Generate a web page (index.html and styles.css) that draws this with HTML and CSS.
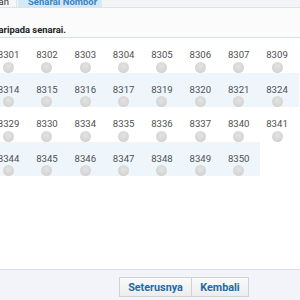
FILE: index.html
```html
<!DOCTYPE html>
<html lang="ms">
<head>
<meta charset="utf-8">
<title>Senarai Nombor</title>
<link rel="stylesheet" href="styles.css">
</head>
<body>
<div class="page">
  <div class="tabs">
    <div class="tab tab-first"><span>Pilihan</span></div>
    <div class="tab tab-active">Senarai Nombor</div>
  </div>
  <div class="intro">
    <div class="intro-box"><p class="intro-text">Sila pilih nombor daripada senarai.</p></div>
  </div>
  <div class="grid">
    <div class="cell"><div class="opt"><span class="num">8301</span><span class="radio"></span></div></div>
    <div class="cell"><div class="opt"><span class="num">8302</span><span class="radio"></span></div></div>
    <div class="cell"><div class="opt"><span class="num">8303</span><span class="radio"></span></div></div>
    <div class="cell"><div class="opt"><span class="num">8304</span><span class="radio"></span></div></div>
    <div class="cell"><div class="opt"><span class="num">8305</span><span class="radio"></span></div></div>
    <div class="cell"><div class="opt"><span class="num">8306</span><span class="radio"></span></div></div>
    <div class="cell"><div class="opt"><span class="num">8307</span><span class="radio"></span></div></div>
    <div class="cell"><div class="opt"><span class="num">8309</span><span class="radio"></span></div></div>

    <div class="cell alt"><div class="opt"><span class="num">8314</span><span class="radio"></span></div></div>
    <div class="cell alt"><div class="opt"><span class="num">8315</span><span class="radio"></span></div></div>
    <div class="cell alt"><div class="opt"><span class="num">8316</span><span class="radio"></span></div></div>
    <div class="cell alt"><div class="opt"><span class="num">8317</span><span class="radio"></span></div></div>
    <div class="cell alt"><div class="opt"><span class="num">8319</span><span class="radio"></span></div></div>
    <div class="cell alt"><div class="opt"><span class="num">8320</span><span class="radio"></span></div></div>
    <div class="cell alt"><div class="opt"><span class="num">8321</span><span class="radio"></span></div></div>
    <div class="cell alt"><div class="opt"><span class="num">8324</span><span class="radio"></span></div></div>

    <div class="cell"><div class="opt"><span class="num">8329</span><span class="radio"></span></div></div>
    <div class="cell"><div class="opt"><span class="num">8330</span><span class="radio"></span></div></div>
    <div class="cell"><div class="opt"><span class="num">8334</span><span class="radio"></span></div></div>
    <div class="cell"><div class="opt"><span class="num">8335</span><span class="radio"></span></div></div>
    <div class="cell"><div class="opt"><span class="num">8336</span><span class="radio"></span></div></div>
    <div class="cell"><div class="opt"><span class="num">8337</span><span class="radio"></span></div></div>
    <div class="cell"><div class="opt"><span class="num">8340</span><span class="radio"></span></div></div>
    <div class="cell"><div class="opt"><span class="num">8341</span><span class="radio"></span></div></div>

    <div class="cell alt"><div class="opt"><span class="num">8344</span><span class="radio"></span></div></div>
    <div class="cell alt"><div class="opt"><span class="num">8345</span><span class="radio"></span></div></div>
    <div class="cell alt"><div class="opt"><span class="num">8346</span><span class="radio"></span></div></div>
    <div class="cell alt"><div class="opt"><span class="num">8347</span><span class="radio"></span></div></div>
    <div class="cell alt"><div class="opt"><span class="num">8348</span><span class="radio"></span></div></div>
    <div class="cell alt"><div class="opt"><span class="num">8349</span><span class="radio"></span></div></div>
    <div class="cell alt"><div class="opt"><span class="num">8350</span><span class="radio"></span></div></div>
  </div>
  <div class="spacer"></div>
  <div class="footer">
    <div class="btn-group">
      <button class="btn btn-next" type="button">Seterusnya</button>
      <button class="btn btn-back" type="button">Kembali</button>
    </div>
  </div>
</div>
</body>
</html>
```

FILE: styles.css
```css
* { box-sizing: border-box; }
html, body {
  margin: 0;
  padding: 0;
  background: #ffffff;
  overflow: hidden;
}
body {
  font-family: Roboto, "Noto Sans", Arial, sans-serif;
  color: #555555;
}
.page {
  width: 300px;
  height: 300px;
  display: flex;
  flex-direction: column;
  overflow: hidden;
}
.tabs {
  display: flex;
  height: 8px;
  background: #f3f4f5;
  border-bottom: 1px solid #dfe3e6;
  overflow: hidden;
  align-items: flex-end;
}
.tab {
  height: 20px;
  flex: none;
  display: flex;
  align-items: flex-end;
  padding-bottom: 0;
  font-size: 9.5px;
  line-height: 11px;
  white-space: nowrap;
  font-weight: bold;
}
.tab-first {
  width: 17px;
  justify-content: flex-end;
  padding-right: 7px;
  background: #f7f7f7;
  color: #333333;
  border-right: 1px solid #e1e4e6;
  font-weight: normal;
}
.tab-active {
  width: 84px;
  margin-left: 1px;
  padding-left: 10px;
  background: #d3e9f7;
  color: #3b84c4;
}
.intro {
  height: 30px;
  background: #fbfbfc;
  border-bottom: 1.5px solid #d3e1e8;
  display: flex;
  align-items: flex-end;
  flex: none;
}
.intro-box {
  width: 66px;
  display: flex;
  justify-content: flex-end;
}
.intro-text {
  margin: 0 0 2.5px 0;
  white-space: nowrap;
  font-size: 9.4px;
  line-height: 11px;
  font-weight: bold;
  color: #222222;
}
.grid {
  margin-left: -8.2px;
  display: grid;
  grid-template-columns: repeat(8, 38.35px);
  grid-auto-rows: 34.5px;
  flex: none;
}
.cell {
  padding: 5.2px 0 0 6px;
}
.cell.alt {
  background: #eef6fc;
}
.opt {
  display: inline-flex;
  flex-direction: column;
  align-items: center;
  gap: 1.5px;
}
.num {
  font-size: 9.6px;
  line-height: 11px;
  color: #505050;
}
.radio {
  width: 11px;
  height: 11px;
  border-radius: 50%;
  background: radial-gradient(circle at 50% 40%, #e3e3e3 0%, #d6d6d6 60%, #cacaca 100%);
}
.spacer {
  flex: 1;
}
.footer {
  height: 31px;
  flex: none;
  border-top: 1px solid #d6dfe7;
  background: #f3f4f9;
  display: flex;
  justify-content: flex-end;
  padding: 7px 51px 0 0;
}
.btn-group {
  display: flex;
  height: 20px;
}
.btn {
  font-family: Roboto, Arial, sans-serif;
  font-weight: bold;
  font-size: 10.8px;
  color: #1d6aa5;
  background: linear-gradient(#fbfbfb, #ececec);
  border: 1px solid #d2d2d2;
  padding: 0;
  margin: 0;
  height: 20px;
  cursor: pointer;
}
.btn-next {
  width: 73px;
}
.btn-back {
  width: 57px;
  border-left: none;
}
```
